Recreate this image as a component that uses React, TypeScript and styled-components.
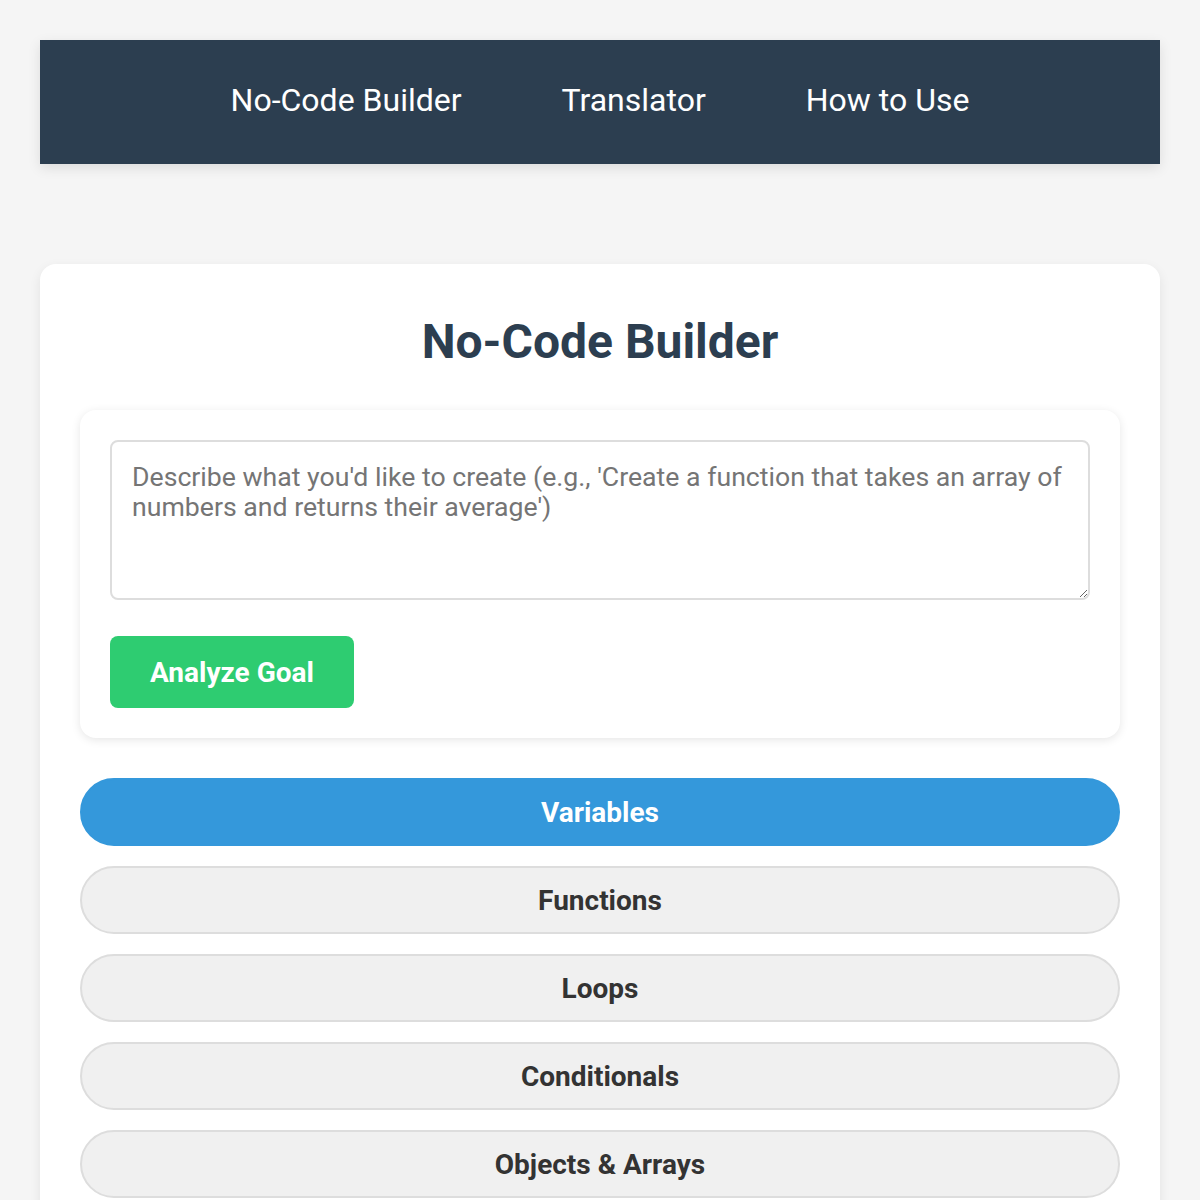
import React, { useState } from 'react'
import styled, { createGlobalStyle } from 'styled-components'

const GlobalStyle = createGlobalStyle`
  body {
    margin: 0;
    background: #f5f5f5;
    font-family: Roboto, "Liberation Sans", Arial, sans-serif;
  }
  * {
    box-sizing: border-box;
  }
`

const Page = styled.div`
  padding: 40px;
`

const Nav = styled.nav`
  background: #2c3e50;
  height: 124px;
  padding-bottom: 4px;
  display: flex;
  align-items: center;
  justify-content: center;
  gap: 100px;
  box-shadow: 0 4px 12px rgba(0, 0, 0, 0.1);
`

const NavLink = styled.a`
  color: #ffffff;
  font-size: 32px;
  text-decoration: none;
  cursor: pointer;
`

const Card = styled.section`
  margin-top: 100px;
  background: #ffffff;
  border-radius: 16px;
  padding: 50px 40px 40px;
  box-shadow: 0 4px 12px rgba(0, 0, 0, 0.08);
`

const Title = styled.h2`
  margin: 0 0 40px;
  text-align: center;
  color: #2c3e50;
  font-size: 48px;
  font-weight: 700;
  line-height: 56px;
`

const GoalBox = styled.div`
  background: #ffffff;
  border-radius: 16px;
  padding: 30px;
  box-shadow: 0 2px 10px rgba(0, 0, 0, 0.1);
`

const GoalInput = styled.textarea`
  display: block;
  width: 100%;
  height: 160px;
  padding: 20px;
  border: 2px solid #dddddd;
  border-radius: 8px;
  font-family: inherit;
  font-size: 26.67px;
  line-height: 30px;
  color: #333;
  resize: vertical;

  &::placeholder {
    color: #757575;
  }
`

const AnalyzeButton = styled.button`
  margin-top: 36px;
  height: 72px;
  padding: 0 40px;
  border: none;
  border-radius: 8px;
  background: #2ecc71;
  color: #ffffff;
  font-family: inherit;
  font-size: 28px;
  font-weight: 700;
  cursor: pointer;
`

const TabList = styled.div`
  margin-top: 40px;
  display: flex;
  flex-direction: column;
  gap: 20px;
`

const Tab = styled.button<{ $active: boolean }>`
  height: 68px;
  border-radius: 34px;
  border: 2px solid ${({ $active }) => ($active ? '#3498db' : '#dddddd')};
  background: ${({ $active }) => ($active ? '#3498db' : '#f0f0f0')};
  color: ${({ $active }) => ($active ? '#ffffff' : '#333333')};
  font-family: inherit;
  font-size: 28px;
  font-weight: 700;
  cursor: pointer;
`

const tabs = ['Variables', 'Functions', 'Loops', 'Conditionals', 'Objects & Arrays']

const App = () => {
  const [active, setActive] = useState('Variables')

  return (
    <Page>
      <GlobalStyle />
      <Nav>
        <NavLink>No-Code Builder</NavLink>
        <NavLink>Translator</NavLink>
        <NavLink>How to Use</NavLink>
      </Nav>
      <Card>
        <Title>No-Code Builder</Title>
        <GoalBox>
          <GoalInput placeholder="Describe what you'd like to create (e.g., 'Create a function that takes an array of numbers and returns their average')" />
          <AnalyzeButton>Analyze Goal</AnalyzeButton>
        </GoalBox>
        <TabList>
          {tabs.map((t) => (
            <Tab key={t} $active={t === active} onClick={() => setActive(t)}>
              {t}
            </Tab>
          ))}
        </TabList>
      </Card>
    </Page>
  )
}

export default App
